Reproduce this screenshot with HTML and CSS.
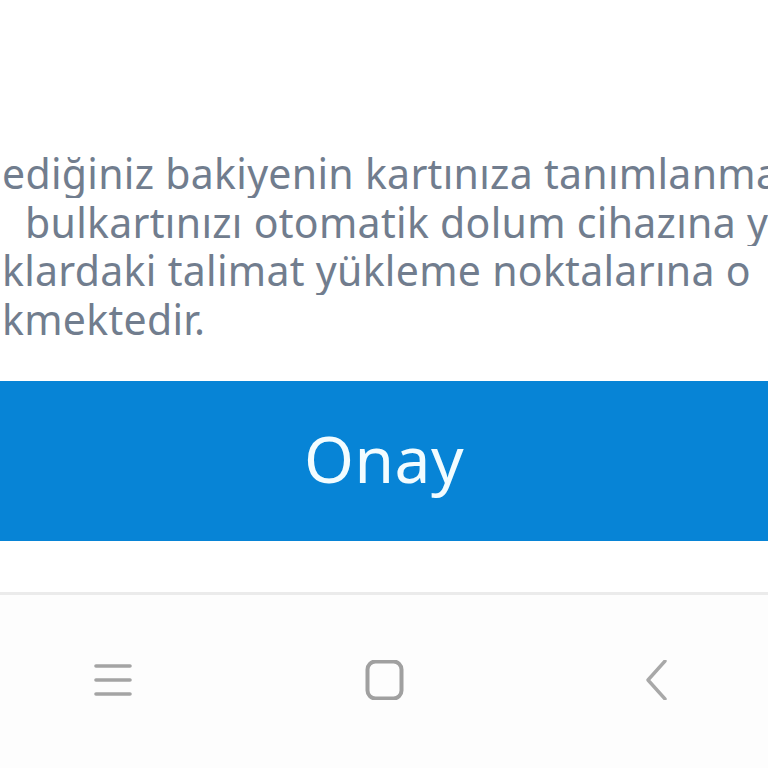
FILE: index.html
```html
<!DOCTYPE html>
<html lang="tr">
<head>
<meta charset="utf-8">
<link rel="stylesheet" href="styles.css">
</head>
<body>
<div class="screen">
  <div class="message">
    <div class="line">ediğiniz bakiyenin kartınıza tanımlanma</div>
    <div class="line indent">bulkartınızı otomatik dolum cihazına ya</div>
    <div class="line">klardaki talimat yükleme noktalarına o</div>
    <div class="line">kmektedir.</div>
  </div>
  <button class="confirm">Onay</button>
  <div class="gap"></div>
  <div class="divider"></div>
  <nav class="navbar">
    <svg class="nav-icon" viewBox="0 0 40 40" width="40" height="40">
      <path d="M4 6 H38 M4 20 H38 M4 34 H38" stroke="#a4a4a4" stroke-width="3.6" stroke-linecap="round" fill="none"/>
    </svg>
    <svg class="nav-icon" viewBox="0 0 40 40" width="40" height="40">
      <rect x="2.5" y="1.5" width="34" height="37" rx="8" stroke="#a0a0a0" stroke-width="4" fill="none"/>
    </svg>
    <svg class="nav-icon" viewBox="0 0 40 40" width="40" height="40">
      <path d="M28 1 L11 20 L28 39" stroke="#a8a8a8" stroke-width="3.4" stroke-linecap="round" stroke-linejoin="round" fill="none"/>
    </svg>
  </nav>
</div>
</body>
</html>
```

FILE: styles.css
```css
html, body {
  margin: 0;
  padding: 0;
  background: #ffffff;
}

.screen {
  width: 768px;
  height: 768px;
  overflow: hidden;
  display: flex;
  flex-direction: column;
  font-family: "Noto Sans", "Open Sans", "DejaVu Sans", sans-serif;
}

.message {
  flex: none;
  padding-top: 149px;
  padding-left: 2px;
  color: #717d8e;
  font-size: 41px;
  line-height: 48.5px;
  letter-spacing: 0.3px;
  height: 381px;
  box-sizing: border-box;
}

.line {
  white-space: nowrap;
  overflow: hidden;
}

.indent {
  padding-left: 23px;
}

.confirm {
  flex: none;
  display: block;
  width: 768px;
  height: 160px;
  margin: 0;
  border: none;
  padding: 0 0 6px 0;
  background: #0784d6;
  color: #f2fcff;
  font-family: "Noto Sans", "Open Sans", "DejaVu Sans", sans-serif;
  font-size: 64px;
  font-weight: 400;
  letter-spacing: 0.5px;
}

.gap {
  flex: none;
  height: 51px;
}

.divider {
  flex: none;
  height: 3px;
  background: #ebebeb;
}

.navbar {
  flex: 1;
  display: flex;
  align-items: center;
  justify-content: space-between;
  padding: 0 91px 4px 92px;
  background: #fdfdfd;
}

.nav-icon {
  display: block;
  filter: blur(0.6px);
}
```
